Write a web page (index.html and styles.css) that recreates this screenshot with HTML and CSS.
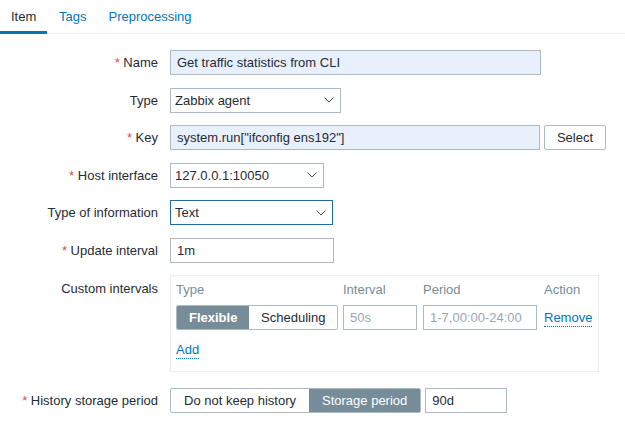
FILE: index.html
```html
<!DOCTYPE html>
<html>
<head>
<meta charset="utf-8">
<link rel="stylesheet" href="styles.css">
</head>
<body>
<div class="tabs">
  <span class="tab active">Item</span>
  <span class="tab">Tags</span>
  <span class="tab">Preprocessing</span>
</div>
<div class="form">
  <div class="row">
    <div class="label"><span class="req">*</span> Name</div>
    <div class="field"><div class="input fill w-name">Get traffic statistics from CLI</div></div>
  </div>
  <div class="row">
    <div class="label">Type</div>
    <div class="field"><div class="select w-type"><span>Zabbix agent</span><svg width="10" height="6" viewBox="0 0 10 6"><path d="M0.5 0.5 L5 5 L9.5 0.5" fill="none" stroke="#3b4a52" stroke-width="1"/></svg></div></div>
  </div>
  <div class="row">
    <div class="label"><span class="req">*</span> Key</div>
    <div class="field"><div class="input fill w-key">system.run["ifconfig ens192"]</div><div class="btn">Select</div></div>
  </div>
  <div class="row">
    <div class="label"><span class="req">*</span> Host interface</div>
    <div class="field"><div class="select w-host"><span>127.0.0.1:10050</span><svg width="10" height="6" viewBox="0 0 10 6"><path d="M0.5 0.5 L5 5 L9.5 0.5" fill="none" stroke="#3b4a52" stroke-width="1"/></svg></div></div>
  </div>
  <div class="row">
    <div class="label">Type of information</div>
    <div class="field"><div class="select focus w-info"><span>Text</span><svg width="10" height="6" viewBox="0 0 10 6"><path d="M0.5 0.5 L5 5 L9.5 0.5" fill="none" stroke="#3b4a52" stroke-width="1"/></svg></div></div>
  </div>
  <div class="row">
    <div class="label"><span class="req">*</span> Update interval</div>
    <div class="field"><div class="input w-upd">1m</div></div>
  </div>
  <div class="row row-top">
    <div class="label label-top">Custom intervals</div>
    <div class="field">
      <div class="box">
        <div class="grid">
          <div class="hd">Type</div>
          <div class="hd">Interval</div>
          <div class="hd">Period</div>
          <div class="hd">Action</div>
          <div class="seg seg-small"><span class="on bold">Flexible</span><span>Scheduling</span></div>
          <div class="input ph w-int">50s</div>
          <div class="input ph w-per">1-7,00:00-24:00</div>
          <div class="link-cell"><span class="link">Remove</span></div>
        </div>
        <div class="add"><span class="link">Add</span></div>
      </div>
    </div>
  </div>
  <div class="row">
    <div class="label"><span class="req">*</span> History storage period</div>
    <div class="field"><div class="seg"><span>Do not keep history</span><span class="on">Storage period</span></div><div class="input w-hist">90d</div></div>
  </div>
</div>
</body>
</html>
```
FILE: styles.css
```css
* { box-sizing: border-box; }
body {
  margin: 0;
  font-family: "Liberation Sans", Arial, sans-serif;
  font-size: 13px;
  color: #1f2c33;
  background: #fff;
}
.tabs {
  display: flex;
  height: 34px;
  border-bottom: 1px solid #ebeef0;
}
.tab {
  padding: 9px 11px 0;
  color: #0275b8;
  line-height: 16px;
}
.tab:nth-child(2) { padding-left: 12px; padding-right: 11px; }
.tab:nth-child(3) { padding-left: 11px; }
.tab.active {
  color: #1f2c33;
  border-bottom: 3px solid #0275b8;
  margin-bottom: -1px;
  width: 47px;
}
.form {
  display: flex;
  flex-direction: column;
  gap: 12.5px;
  padding-top: 16px;
}
.row {
  display: flex;
  align-items: center;
  gap: 12px;
}
.row-top { align-items: flex-start; margin-bottom: 3px; }
.label {
  width: 158px;
  text-align: right;
  line-height: 25px;
  flex: none;
}
.label-top { line-height: 16px; padding-top: 6px; }
.req { color: #d64e4e; }
.field {
  display: flex;
  gap: 4px;
}
.input, .select {
  height: 25px;
  border: 1px solid #acbbc2;
  background: #fff;
  padding: 0 6px;
  line-height: 23px;
  white-space: nowrap;
  overflow: hidden;
}
.fill { background: #e8f0fe; }
.select {
  display: flex;
  justify-content: space-between;
  align-items: center;
  padding: 0 6px 0 4px;
}
.select svg { flex: none; }
.focus { border-color: #1f6aa0; }
.w-name { width: 371px; }
.w-type { width: 171px; }
.w-key { width: 370px; }
.w-host { width: 154px; }
.w-info { width: 163px; }
.w-upd { width: 164px; }
.w-int { width: 74px; }
.w-per { width: 114px; }
.w-hist { width: 82px; }
.ph { color: #9aa7ae; }
.btn {
  height: 25px;
  width: 62px;
  border: 1px solid #acbbc2;
  border-radius: 2px;
  text-align: center;
  line-height: 23px;
  background: #fff;
}
.seg {
  display: flex;
  height: 25px;
  border: 1px solid #acbbc2;
  border-radius: 2px;
  overflow: hidden;
}
.seg span {
  padding: 0 13px;
  line-height: 23px;
  white-space: nowrap;
}
.seg .on {
  background: #768d99;
  color: #fff;
}
.seg-small { width: 162px; }
.seg-small span { padding: 0 12px; }
.seg-small span:last-child { flex: 1; text-align: center; padding: 0; }
.bold { font-weight: bold; }
.box {
  width: 429px;
  border: 1px solid #ebeef0;
  padding: 5px 5px 12px;
}
.grid {
  display: grid;
  grid-template-columns: 167px 80px 121px auto;
  row-gap: 6px;
}
.hd {
  color: #768d99;
  line-height: 18px;
}
.link-cell { line-height: 25px; }
.link {
  color: #0275b8;
  border-bottom: 1px dotted #0275b8;
  padding-bottom: 1px;
}
.add {
  padding-top: 11px;
  line-height: 18px;
}
```
